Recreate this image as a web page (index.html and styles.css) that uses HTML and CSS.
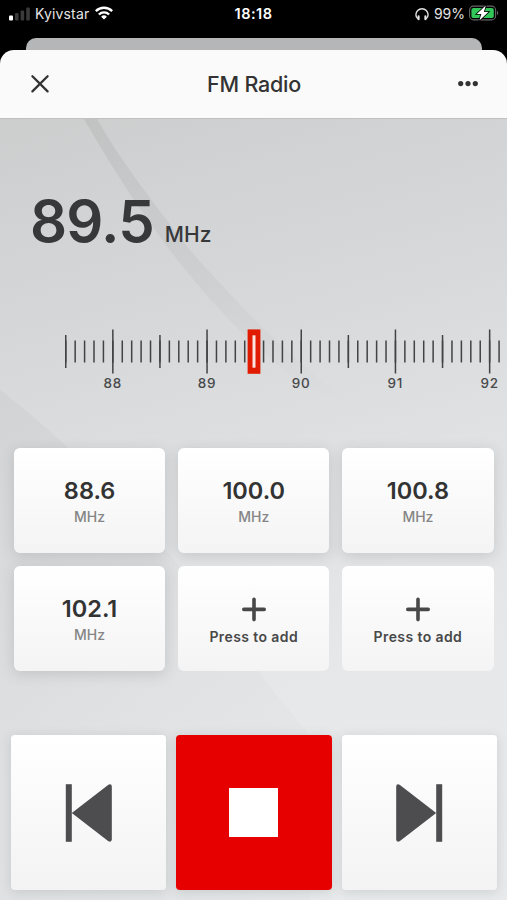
FILE: index.html
```html
<!DOCTYPE html>
<html lang="en">
<head>
    <meta charset="UTF-8">
    <meta name="viewport" content="width=device-width, initial-scale=1.0">
    <title>FM Radio</title>
    <link rel="stylesheet" href="styles.css">
</head>
<body>

<div class="status-bar">
    <div class="status-left">
        <svg class="signal" width="22" height="14" viewBox="0 0 22 14">
            <rect x="0" y="8.5" width="4" height="5" rx="1" fill="#fff"/>
            <rect x="6" y="6" width="3.6" height="7.5" rx="1" fill="#3a3a3a"/>
            <rect x="11.6" y="3.5" width="3.6" height="10" rx="1" fill="#3a3a3a"/>
            <rect x="17.2" y="0.5" width="3.6" height="13" rx="1" fill="#3a3a3a"/>
        </svg>
        <span class="carrier">Kyivstar</span>
        <svg class="wifi" width="18" height="14" viewBox="0 0 18 14" fill="none" stroke="#fff" stroke-width="2.4">
            <path d="M0.8 5.1a11.7 11.7 0 0 1 16.4 0"/>
            <path d="M3.9 8.5a7.3 7.3 0 0 1 10.2 0"/>
            <path d="M9 13.6L6.1 10.7a4.1 4.1 0 0 1 5.8 0z" fill="#fff" stroke="none"/>
        </svg>
    </div>
    <span class="clock">18:18</span>
    <div class="status-right">
        <svg class="headphones" width="14" height="13" viewBox="0 0 14 13" fill="none" stroke="#e4e4e4" stroke-width="1.4" stroke-linecap="round">
            <path d="M2.6 10.4C1.4 9.6 0.9 8.3 0.9 6.8a6.1 6.1 0 0 1 12.2 0c0 1.5-0.5 2.8-1.7 3.6"/>
            <path d="M3.6 8.4v2.8M10.4 8.4v2.8" stroke-width="2.1"/>
        </svg>
        <span class="percent">99%</span>
        <svg class="battery" width="31" height="16" viewBox="0 0 31 16">
            <rect x="0.6" y="1.1" width="26" height="13.8" rx="4" fill="none" stroke="#666" stroke-width="1.1"/>
            <path d="M28 5.8c1.7 0.7 1.7 3.7 0 4.4z" fill="#666"/>
            <rect x="2.4" y="2.9" width="22.4" height="10.2" rx="2.2" fill="#32c759"/>
            <path d="M16.8 0.6L7.8 9h4.5L10.4 15.4 19.4 7h-4.5z" fill="#fff" stroke="#000" stroke-width="1.6" paint-order="stroke"/>
        </svg>
    </div>
</div>

<div class="back-sheet"></div>

<div class="sheet">
    <div class="header">
        <button class="icon-button" aria-label="Close">
            <svg width="20" height="20" viewBox="0 0 20 20" stroke="#333" stroke-width="2.3" stroke-linecap="round">
                <path d="M2.4 2.2l15.2 15.2M17.6 2.2L2.4 17.4"/>
            </svg>
        </button>
        <h1 class="title">FM Radio</h1>
        <button class="icon-button" aria-label="More">
            <svg width="20" height="20" viewBox="0 0 20 20" fill="#333">
                <circle cx="2.7" cy="9.6" r="2.6"/>
                <circle cx="10" cy="9.6" r="2.6"/>
                <circle cx="17.3" cy="9.6" r="2.6"/>
            </svg>
        </button>
    </div>

    <div class="content">
        <svg class="backdrop" width="507" height="781" viewBox="0 119 507 781">
            <defs>
                <linearGradient id="streak" x1="0" y1="0" x2="0" y2="1">
                    <stop offset="0" stop-color="#777" stop-opacity="0.14"/>
                    <stop offset="0.6" stop-color="#777" stop-opacity="0.07"/>
                    <stop offset="1" stop-color="#777" stop-opacity="0"/>
                </linearGradient>
                <linearGradient id="shade" x1="0" y1="0" x2="1" y2="0">
                    <stop offset="0" stop-color="#888" stop-opacity="0.08"/>
                    <stop offset="1" stop-color="#888" stop-opacity="0.03"/>
                </linearGradient>
            </defs>
            <path d="M84 119C130 200 190 285 250 340C285 372 315 397 340 406L350 402C290 360 225 290 190 250C155 205 120 160 97 119z" fill="url(#streak)"/>
            <path d="M0 390C40 420 120 490 190 580S270 690 310 735V900H0z" fill="url(#shade)"/>
        </svg>

        <div class="reading">
            <span class="frequency">89.5</span>
            <span class="unit">MHz</span>
        </div>

        <!-- 0.1 MHz = 9.42px -->
        <svg class="dial" width="507" height="66" viewBox="0 0 507 66">
            <g stroke="#424345">
                <path d="M65 22.5H502" stroke-width="22" stroke-dasharray="1.5 7.92"/>
                <path d="M65 22.5H480" stroke-width="33" stroke-dasharray="1.5 92.7"/>
                <path d="M112.1 22.5H492" stroke-width="44" stroke-dasharray="1.5 92.7"/>
            </g>
            <rect x="247.6" y="0.4" width="12.8" height="44.4" fill="#e11b00"/>
            <rect x="252.5" y="6.3" width="3" height="32.4" fill="#fbe3df"/>
            <g class="dial-labels">
                <text x="112.8" y="59">88</text>
                <text x="207" y="59">89</text>
                <text x="301.2" y="59">90</text>
                <text x="395.4" y="59">91</text>
                <text x="489.6" y="59">92</text>
            </g>
        </svg>

        <div class="presets">
            <button class="preset">
                <span class="preset-value">88.6</span>
                <span class="preset-unit">MHz</span>
            </button>
            <button class="preset">
                <span class="preset-value">100.0</span>
                <span class="preset-unit">MHz</span>
            </button>
            <button class="preset">
                <span class="preset-value">100.8</span>
                <span class="preset-unit">MHz</span>
            </button>
            <button class="preset">
                <span class="preset-value">102.1</span>
                <span class="preset-unit">MHz</span>
            </button>
            <button class="preset empty">
                <svg class="plus" width="26" height="26" viewBox="0 0 26 26" stroke="#484848" stroke-width="3.6" stroke-linecap="round">
                    <path d="M13 3.2v20.4M2.8 13.4h20.4"/>
                </svg>
                <span class="preset-add">Press to add</span>
            </button>
            <button class="preset empty">
                <svg class="plus" width="26" height="26" viewBox="0 0 26 26" stroke="#484848" stroke-width="3.6" stroke-linecap="round">
                    <path d="M13 3.2v20.4M2.8 13.4h20.4"/>
                </svg>
                <span class="preset-add">Press to add</span>
            </button>
        </div>

        <div class="controls">
            <button class="control" aria-label="Previous">
                <svg width="48" height="58" viewBox="0 0 48 58" fill="#4d4d4f">
                    <path d="M0.8 0.2h6v57.6h-6z"/>
                    <path d="M6.8 29L43.4 0.7Q46.8-0.6 46.8 2.8v52.4Q46.8 58.6 43.4 57.3z"/>
                </svg>
            </button>
            <button class="control stop" aria-label="Stop">
                <span class="stop-icon"></span>
            </button>
            <button class="control" aria-label="Next">
                <svg width="48" height="58" viewBox="0 0 48 58" fill="#4d4d4f">
                    <path d="M41.2 0.2h6v57.6h-6z"/>
                    <path d="M41.2 29L4.6 0.7Q1.2-0.6 1.2 2.8v52.4Q1.2 58.6 4.6 57.3z"/>
                </svg>
            </button>
        </div>
    </div>
</div>

</body>
</html>
```
FILE: styles.css
```css
* {
    margin: 0;
    padding: 0;
    box-sizing: border-box;
}

body {
    width: 507px;
    height: 900px;
    overflow: hidden;
    background-color: #000;
    font-family: 'Inter', 'Liberation Sans', sans-serif;
    color: #333;
    display: flex;
    flex-direction: column;
}

button {
    border: none;
    background: none;
    font-family: inherit;
    color: inherit;
    cursor: pointer;
}

svg {
    display: block;
    flex-shrink: 0;
}

/* Status bar */
.status-bar {
    height: 38px;
    padding: 0 7px 10px 9px;
    display: grid;
    grid-template-columns: 1fr auto 1fr;
    align-items: center;
    color: #e4e4e4;
    font-size: 14px;
    line-height: 28px;
}

.status-left,
.status-right {
    display: flex;
    align-items: center;
}

.status-right {
    justify-content: flex-end;
}

.carrier {
    margin: 0 6px 0 4px;
    font-size: 14px;
    letter-spacing: 0.15px;
}

.wifi {
    margin-bottom: 3px;
}

.clock {
    margin-right: 2px;
    color: #fff;
    font-size: 14.5px;
    font-weight: 600;
    letter-spacing: 0.5px;
}

.percent {
    margin: 0 4px 0 5px;
}

.battery {
    margin-bottom: 2px;
}

/* Sheets */
.back-sheet {
    height: 12px;
    margin: 0 25px 0 26px;
    border-radius: 10px 10px 0 0;
    background-color: #b5b6b7;
}

.sheet {
    flex: 1;
    display: flex;
    flex-direction: column;
    border-radius: 14px 14px 0 0;
    background-color: #fafafa;
    overflow: hidden;
}

.header {
    height: 69px;
    padding: 0 29px 1px 30px;
    display: flex;
    align-items: center;
    justify-content: space-between;
    border-bottom: 1px solid #bfc0c1;
}

.title {
    font-size: 21.5px;
    font-weight: 500;
    line-height: 26px;
    letter-spacing: -0.25px;
}

.content {
    flex: 1;
    position: relative;
    padding-top: 73px;
    background: linear-gradient(165deg, #cccece 0%, #d5d7d9 25%, #dfe1e3 48%, #e6e8e9 72%, #e8eaeb 100%);
}

.backdrop {
    position: absolute;
    top: 0;
    left: 0;
}

.reading,
.dial,
.presets,
.controls {
    position: relative;
}

.reading {
    height: 58px;
    padding-left: 30px;
    display: flex;
    align-items: baseline;
    gap: 11px;
    line-height: 58px;
    color: #37383a;
}

.frequency {
    font-size: 58px;
    font-weight: 600;
    letter-spacing: -0.8px;
}

.unit {
    font-size: 21px;
    font-weight: 500;
}

/* Tuning dial */
.dial {
    margin-top: 79px;
}

.dial-labels {
    font-size: 13.5px;
    font-weight: 500;
    letter-spacing: 0.8px;
    text-anchor: middle;
    fill: #48494b;
}

/* Presets */
.presets {
    margin-top: 53px;
    padding: 0 13.5px 0 14px;
    display: grid;
    grid-template-columns: repeat(3, 1fr);
    gap: 13px;
}

.preset {
    height: 105px;
    padding-top: 28px;
    display: flex;
    flex-direction: column;
    align-items: center;
    border-radius: 6px;
    background: linear-gradient(#fff, #f4f4f4);
    box-shadow: 0 3px 14px rgba(70, 80, 80, 0.18);
}

.preset-value {
    font-size: 23.5px;
    font-weight: 600;
    line-height: 30px;
}

.preset-unit {
    margin-top: 1px;
    font-size: 14px;
    font-weight: 500;
    line-height: 20px;
    color: #858585;
}

.preset.empty {
    padding-top: 30px;
    box-shadow: none;
}

.preset-add {
    margin-top: 5px;
    font-size: 14px;
    font-weight: 600;
    line-height: 20px;
    letter-spacing: 0.4px;
    color: #484848;
}

/* Playback */
.controls {
    margin-top: 64px;
    padding: 0 10px 0 11px;
    display: grid;
    grid-template-columns: repeat(3, 1fr);
    gap: 10px;
}

.control {
    height: 155px;
    display: flex;
    align-items: center;
    justify-content: center;
    border-radius: 4px;
    background: linear-gradient(#fff, #f3f3f3);
    box-shadow: 0 2px 12px rgba(70, 80, 80, 0.16);
}

.control.stop {
    background: #e60000;
}

.stop-icon {
    width: 49px;
    height: 49px;
    background-color: #fff;
}
```
